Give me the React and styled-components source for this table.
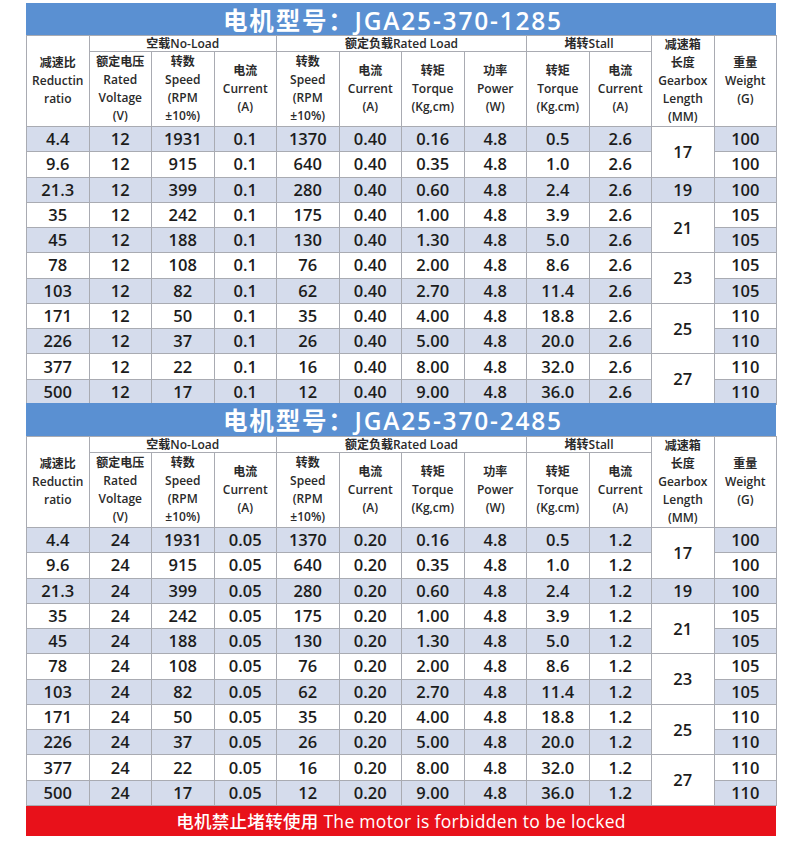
import React from "react";
import styled, { createGlobalStyle } from "styled-components";

const Global = createGlobalStyle`
  html, body { margin: 0; padding: 0; background: #ffffff; }
  body { font-family: "Open Sans", "Noto Sans CJK SC", sans-serif; color: #1c1c1c; }
`;

const Page = styled.div`
  padding: 3px 0 0 26px;
  width: 750px;
`;

const Section = styled.section`
  display: flex;
  flex-direction: column;
  width: 750px;
`;

const TitleBar = styled.div`
  height: ${(p) => p.$h}px;
  background: #5a90d2;
  color: #ffffff;
  display: flex;
  align-items: center;
  justify-content: center;
  font-family: "Open Sans", "Noto Sans CJK SC", sans-serif;
  font-size: 24.5px;
  font-weight: 600;
  letter-spacing: 1.8px;
  padding-right: 16px;
  box-sizing: border-box;
`;

const Table = styled.table`
  width: 750px;
  table-layout: fixed;
  border-collapse: collapse;
  border-spacing: 0;
`;

const HeadCell = styled.th`
  border: 1px solid #a9abb2;
  padding: 0;
  font-size: 12px;
  font-weight: 600;
  line-height: 18px;
  text-align: center;
  vertical-align: ${(p) => (p.$top ? "top" : "middle")};
  color: #2a2a2a;
  background: #ffffff;
  height: ${(p) => p.$h || "auto"};
`;

const GroupCell = styled(HeadCell)`
  height: 15px;
  line-height: 15px;
`;

const Row = styled.tr`
  height: 25.1px;
  background: ${(p) => (p.$striped ? "#d5dcec" : "#ffffff")};
`;

const Cell = styled.td`
  border: 1px solid #a9abb2;
  padding: 0;
  text-align: center;
  vertical-align: middle;
  font-size: 16.5px;
  font-weight: 600;
  line-height: 20px;
  color: #1c1c1c;
  background: ${(p) => (p.$white ? "#ffffff" : "transparent")};
`;

const Warning = styled.div`
  width: 750px;
  height: 31px;
  margin-top: 1px;
  background: #e8111a;
  color: #ffffff;
  display: flex;
  align-items: center;
  justify-content: center;
  font-size: 17.5px;
  font-weight: 500;
  letter-spacing: 0.3px;
`;

const Lines = ({ items }) =>
  items.map((t, i) => (
    <React.Fragment key={i}>
      {i > 0 && <br />}
      {t}
    </React.Fragment>
  ));

const ratios = ["4.4", "9.6", "21.3", "35", "45", "78", "103", "171", "226", "377", "500"];
const noLoadSpeed = ["1931", "915", "399", "242", "188", "108", "82", "50", "37", "22", "17"];
const ratedSpeed = ["1370", "640", "280", "175", "130", "76", "62", "35", "26", "16", "12"];
const torque = ["0.16", "0.35", "0.60", "1.00", "1.30", "2.00", "2.70", "4.00", "5.00", "8.00", "9.00"];
const stallTorque = ["0.5", "1.0", "2.4", "3.9", "5.0", "8.6", "11.4", "18.8", "20.0", "32.0", "36.0"];
const weight = ["100", "100", "100", "105", "105", "105", "105", "110", "110", "110", "110"];
const gearbox = { 0: ["17", 2], 2: ["19", 1], 3: ["21", 2], 5: ["23", 2], 7: ["25", 2], 9: ["27", 2] };

const models = [
  { name: "JGA25-370-1285", v: "12", i0: "0.1", i: "0.40", is: "2.6", titleH: 32 },
  { name: "JGA25-370-2485", v: "24", i0: "0.05", i: "0.20", is: "1.2", titleH: 33 },
];

function SpecTable({ m }) {
  return (
    <Section>
      <TitleBar $h={m.titleH}>电机型号：{m.name}</TitleBar>
      <Table>
        <colgroup>
          {Array.from({ length: 12 }).map((_, i) => (
            <col key={i} style={{ width: "62.5px" }} />
          ))}
        </colgroup>
        <thead>
          <tr>
            <HeadCell rowSpan={2}>
              <Lines items={["减速比", "Reductin", "ratio"]} />
            </HeadCell>
            <GroupCell colSpan={3}>空载No-Load</GroupCell>
            <GroupCell colSpan={4}>额定负载Rated Load</GroupCell>
            <GroupCell colSpan={2}>堵转Stall</GroupCell>
            <HeadCell rowSpan={2} $top>
              <Lines items={["减速箱", "长度", "Gearbox", "Length", "(MM)"]} />
            </HeadCell>
            <HeadCell rowSpan={2}>
              <Lines items={["重量", "Weight", "(G)"]} />
            </HeadCell>
          </tr>
          <tr>
            <HeadCell $h="71px">
              <Lines items={["额定电压", "Rated", "Voltage", "(V)"]} />
            </HeadCell>
            <HeadCell>
              <Lines items={["转数", "Speed", "(RPM", "±10%)"]} />
            </HeadCell>
            <HeadCell>
              <Lines items={["电流", "Current", "(A)"]} />
            </HeadCell>
            <HeadCell>
              <Lines items={["转数", "Speed", "(RPM", "±10%)"]} />
            </HeadCell>
            <HeadCell>
              <Lines items={["电流", "Current", "(A)"]} />
            </HeadCell>
            <HeadCell>
              <Lines items={["转矩", "Torque", "(Kg,cm)"]} />
            </HeadCell>
            <HeadCell>
              <Lines items={["功率", "Power", "(W)"]} />
            </HeadCell>
            <HeadCell>
              <Lines items={["转矩", "Torque", "(Kg.cm)"]} />
            </HeadCell>
            <HeadCell>
              <Lines items={["电流", "Current", "(A)"]} />
            </HeadCell>
          </tr>
        </thead>
        <tbody>
          {ratios.map((r, idx) => {
            const g = gearbox[idx];
            return (
              <Row key={r} $striped={idx % 2 === 0}>
                <Cell>{r}</Cell>
                <Cell>{m.v}</Cell>
                <Cell>{noLoadSpeed[idx]}</Cell>
                <Cell>{m.i0}</Cell>
                <Cell>{ratedSpeed[idx]}</Cell>
                <Cell>{m.i}</Cell>
                <Cell>{torque[idx]}</Cell>
                <Cell>4.8</Cell>
                <Cell>{stallTorque[idx]}</Cell>
                <Cell>{m.is}</Cell>
                {g && (
                  <Cell rowSpan={g[1]} $white={g[1] > 1}>
                    {g[0]}
                  </Cell>
                )}
                <Cell>{weight[idx]}</Cell>
              </Row>
            );
          })}
        </tbody>
      </Table>
    </Section>
  );
}

export default function App() {
  return (
    <>
      <Global />
      <Page>
        {models.map((m) => (
          <SpecTable key={m.name} m={m} />
        ))}
        <Warning>电机禁止堵转使用 The motor is forbidden to be locked</Warning>
      </Page>
    </>
  );
}
